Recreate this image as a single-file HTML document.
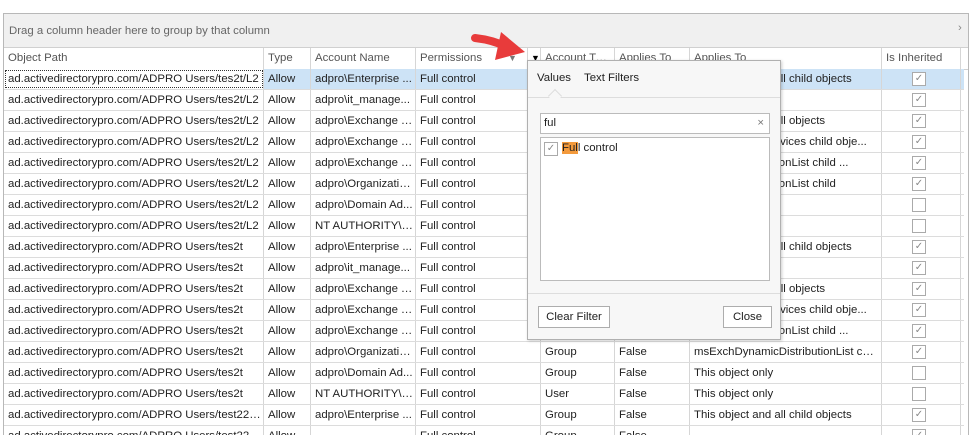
<!DOCTYPE html><html><head><style>
body{margin:0;width:972px;height:434px;overflow:hidden;background:#fff;font-family:"Liberation Sans",sans-serif;font-size:11.4px;color:#222;position:relative}
.wrap{position:absolute;left:3px;top:13px;width:964px;height:421px;border:1px solid #b8b8b8;border-bottom:none;background:#fff;overflow:hidden}
.grp{position:absolute;left:0;top:0;width:964px;height:33px;background:#f0f0f0;border-bottom:1px solid #d0d0d0;color:#666}
.grp span{position:absolute;left:5px;top:11px}
.hd{position:absolute;top:34px;left:0;height:21px;width:964px;background:#fff;border-bottom:1px solid #d0d0d0}
.c{position:absolute;top:0;height:100%;border-right:1px solid #d6d6d6;box-sizing:border-box;padding-left:4px;padding-right:2px;line-height:20px;white-space:nowrap;overflow:hidden;text-overflow:ellipsis}
.hd .c{color:#555;line-height:21px}
.row{position:absolute;left:0;width:960px;height:21px;border-bottom:1px solid #dcdcdc;box-sizing:border-box}
.sel{background:#cde3f6}
.cb{display:inline-block;width:12px;height:12px;border:1px solid #aaa;margin-left:30px;margin-top:3px;vertical-align:top;font-size:10px;line-height:12px;text-align:center;color:#888;background:#fff}
.pop{position:absolute;left:527px;top:60px;width:252px;height:278px;background:#f7f7f7;border:1px solid #b0b0b0;box-shadow:1px 1px 3px rgba(0,0,0,.2)}
.btn{position:absolute;height:20px;border:1px solid #adadad;background:#fff;line-height:20px;text-align:center}
</style></head><body>
<div class="wrap">
<div class="grp"><span>Drag a column header here to group by that column</span><span style="left:954px;top:8px;color:#888">›</span></div>
<div class="hd">
<div class="c" style="left:0;width:260px">Object Path</div>
<div class="c" style="left:260px;width:47px">Type</div>
<div class="c" style="left:307px;width:105px">Account Name</div>
<div class="c" style="left:412px;width:112px;text-overflow:clip">Permissions<span style="position:absolute;left:92px;top:0;color:#777;font-size:9px">▼</span></div>
<div class="c" style="left:524px;width:13px;padding-left:3px;font-size:9px;color:#000;text-overflow:clip">▼</div>
<div class="c" style="left:537px;width:74px">Account Type</div>
<div class="c" style="left:611px;width:75px">Applies To</div>
<div class="c" style="left:686px;width:192px">Applies To</div>
<div class="c" style="left:878px;width:79px">Is Inherited</div>
</div>
<div id="rows"></div>
</div>
<svg style="position:absolute;left:465px;top:26px" width="70" height="40"><path d="M10 12 Q28 14 42 21" stroke="#e83b3b" stroke-width="8" fill="none" stroke-linecap="round"/><polygon points="36,6 60,26 30,34" fill="#e83b3b"/></svg>
<div class="pop">
<div style="position:absolute;left:9px;top:11px">Values</div>
<div style="position:absolute;left:56px;top:11px">Text Filters</div>
<div style="position:absolute;left:0;top:36px;width:252px;border-top:1px solid #ddd"></div>
<div style="position:absolute;left:22px;top:30px;width:9px;height:9px;border-left:1px solid #ddd;border-top:1px solid #ddd;transform:rotate(45deg);background:#f7f7f7"></div>
<div style="position:absolute;left:12px;top:52px;width:228px;height:19px;border:1px solid #bbb;background:#fff;line-height:19px"><span style="padding-left:3px">ful</span><span style="position:absolute;right:5px;color:#777">×</span></div>
<div style="position:absolute;left:12px;top:76px;width:228px;height:142px;border:1px solid #bbb;background:#fff"><span class="cb" style="margin-left:3px;margin-top:4px">✓</span> <span style="position:absolute;left:21px;top:4px"><span style="background:#f39a3c">Ful</span>l control</span></div>
<div style="position:absolute;left:0;top:232px;width:252px;border-top:1px solid #ddd"></div>
<div class="btn" style="left:10px;top:245px;width:70px">Clear Filter</div>
<div class="btn" style="left:195px;top:245px;width:47px">Close</div>
</div>
<script>
var d=[["tes2t/L2","adpro\\Enterprise ...","This object and all child objects",1],["tes2t/L2","adpro\\it_manage...","This object only",1],["tes2t/L2","adpro\\Exchange T...","This object and all objects",1],["tes2t/L2","adpro\\Exchange T...","msExchActiveDevices child obje...",1],["tes2t/L2","adpro\\Exchange T...","msExchDistributionList child ...",1],["tes2t/L2","adpro\\Organizatio...","msExchDistributionList child",1],["tes2t/L2","adpro\\Domain Ad...","This object only",0],["tes2t/L2","NT AUTHORITY\\S...","This object only",0],["tes2t","adpro\\Enterprise ...","This object and all child objects",1],["tes2t","adpro\\it_manage...","This object only",1],["tes2t","adpro\\Exchange T...","This object and all objects",1],["tes2t","adpro\\Exchange T...","msExchActiveDevices child obje...",1],["tes2t","adpro\\Exchange T...","msExchDistributionList child ...",1],["tes2t","adpro\\Organizatio...","msExchDynamicDistributionList child ...",1],["tes2t","adpro\\Domain Ad...","This object only",0],["tes2t","NT AUTHORITY\\S...","This object only",0],["test22/le...","adpro\\Enterprise ...","This object and all child objects",1],["test22/le...","","",1]];
var h="";d.forEach(function(r,i){var t=r[1].indexOf("NT")==0?"User":"Group";var p=r[0].indexOf("test22")==0?"ad.activedirectorypro.com/ADPRO Users/test22/le...":"ad.activedirectorypro.com/ADPRO Users/"+r[0];h+='<div class="row'+(i==0?' sel':'')+'" style="top:'+(55+i*21)+'px">'+
'<div class="c" style="left:0;width:260px;background:#fff'+(i==0?';outline:1px dotted #333;outline-offset:-2px':'')+'">'+p+'</div>'+
'<div class="c" style="left:260px;width:47px">Allow</div><div class="c" style="left:307px;width:105px">'+r[1]+'</div><div class="c" style="left:412px;width:125px">Full control</div>'+
'<div class="c" style="left:537px;width:74px">'+t+'</div><div class="c" style="left:611px;width:75px">False</div><div class="c" style="left:686px;width:192px">'+r[2]+'</div>'+
'<div class="c" style="left:878px;width:79px;padding:0"><span class="cb">'+(r[3]?'✓':'')+'</span></div></div>';});
document.getElementById("rows").innerHTML=h;
</script>
</body></html>
